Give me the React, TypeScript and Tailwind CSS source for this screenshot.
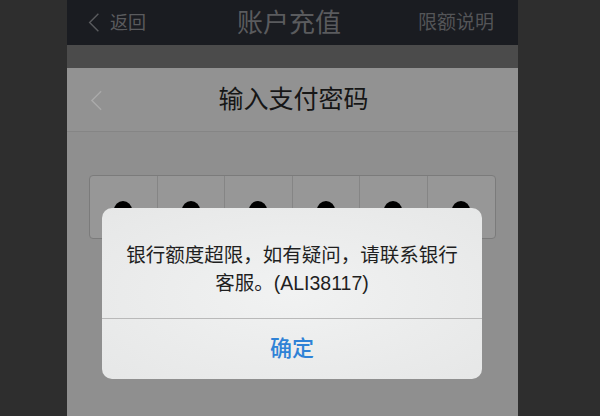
import React from "react";

const font = { fontFamily: '"Liberation Sans", "Noto Sans CJK SC", sans-serif' };

const Chevron = ({ className, width = 2 }: { className: string; width?: number }) => (
  <svg viewBox="0 0 14 24" className={className} fill="none" stroke="currentColor" strokeWidth={width}>
    <path d="M12 2 L2 12 L12 22" />
  </svg>
);

const App = () => {
  return (
    <div className="flex h-[416px] w-[600px] overflow-hidden bg-[#2f2f2f]" style={font}>
      <div className="w-[67px] bg-[#2e2e2e]" />

      <div className="relative flex w-[451px] flex-col bg-[#8f8f8f]">
        {/* top nav (dimmed) */}
        <div className="flex h-[45px] items-center justify-between bg-[#1a1c21] pl-[20px] pr-[24px]">
          <div className="flex items-center gap-[9px] text-[#5a5b5e]">
            <Chevron className="h-[21px] w-[14px]" width={1.6} />
            <span className="text-[18px] leading-none">返回</span>
          </div>
          <span className="pl-[14px] text-[26px] leading-none text-[#5a5b5e]">账户充值</span>
          <span className="text-[19px] leading-none text-[#545558]">限额说明</span>
        </div>
        <div className="h-[23px] bg-[#4b4b4b]" />

        {/* pay password sheet */}
        <div className="flex-1 bg-[#8f8f8f]">
          <div className="relative flex h-[64px] items-center justify-center border-b border-[#858585] bg-[#929292]">
            <Chevron className="absolute left-[23px] top-[21px] h-[23px] w-[13px] text-[#a9a9a9]" width={1.6} />
            <span className="pl-[2px] text-[25px] leading-none text-[#161616]">输入支付密码</span>
          </div>
          <div className="px-[22px] pt-[43px]">
            <div className="grid h-[64px] grid-cols-6 overflow-hidden rounded-[4px] border border-[#7b7b7b] bg-[#979797]">
              {[0, 1, 2, 3, 4, 5].map((i) => (
                <div
                  key={i}
                  className={
                    i < 5
                      ? "flex items-center justify-center border-r border-[#858585] pt-[6px]"
                      : "flex items-center justify-center pt-[6px]"
                  }
                >
                  <div className="h-[18px] w-[18px] rounded-full bg-black" />
                </div>
              ))}
            </div>
          </div>
        </div>

        {/* alert dialog */}
        <div className="absolute left-[35px] top-[208px] flex h-[171px] w-[380px] flex-col overflow-hidden rounded-[10px] bg-[radial-gradient(ellipse_at_center,#f1f2f2,#e6e7e7)]">
          <div className="flex h-[110px] flex-col items-center pt-[33px] text-[19.5px] leading-[28px] text-[#1f1f1f]">
            <span>银行额度超限，如有疑问，请联系银行</span>
            <span>客服。(ALI38117)</span>
          </div>
          <div className="h-px bg-[#b9b9b9]" />
          <div className="flex flex-1 items-center justify-center pb-[1px]">
            <span className="text-[22px] font-medium leading-none text-[#2f82d6]">确定</span>
          </div>
        </div>
      </div>

      <div className="flex-1 bg-[#2e2e2e]" />
    </div>
  );
};

export default App;
